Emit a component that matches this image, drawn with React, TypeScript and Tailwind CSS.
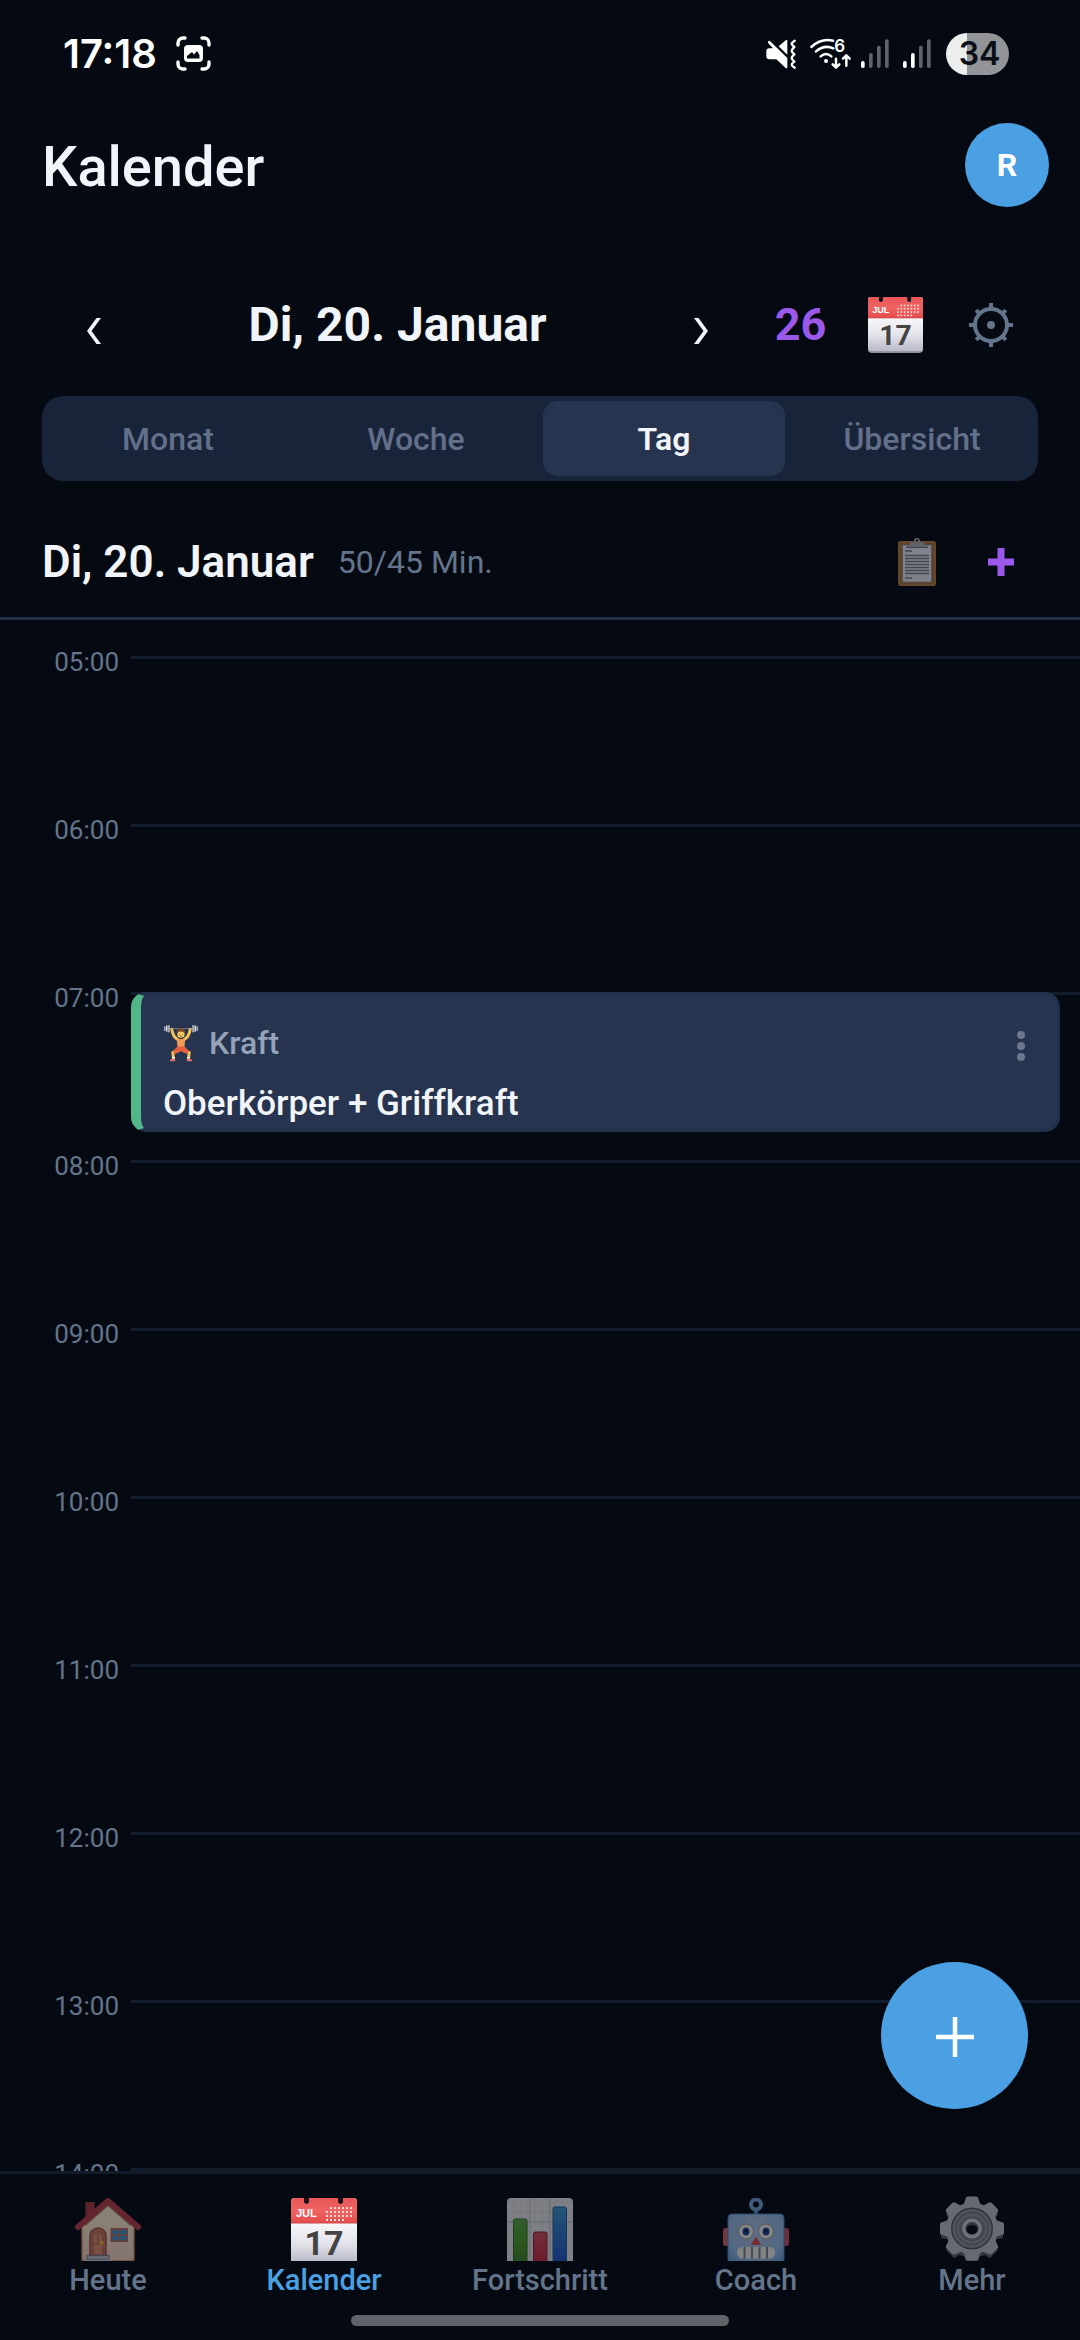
import { useState } from 'react';
import type { ReactNode } from 'react';

function ScreenshotIcon() {
  return (
    <svg viewBox="0 0 35 35" className="h-[35px] w-[35px]" fill="none" aria-hidden="true">
      <path
        d="M2 9V7a5 5 0 0 1 5-5h2M26 2h2a5 5 0 0 1 5 5v2M33 26v2a5 5 0 0 1-5 5h-2M9 33H7a5 5 0 0 1-5-5v-2"
        stroke="#fff"
        strokeWidth="3.4"
        strokeLinecap="round"
      />
      <path
        fillRule="evenodd"
        d="M12 9h11a4 4 0 0 1 4 4v9a4 4 0 0 1-4 4H12a4 4 0 0 1-4-4v-9a4 4 0 0 1 4-4Zm-1 13.500h12.500V19l-2.500-4-3 3.500-2-2.500-5 4Z"
        fill="#fff"
      />
    </svg>
  );
}

function MuteIcon() {
  return (
    <svg viewBox="80 82 90 90" className="h-[30px] w-[30px]" fill="#fff" aria-hidden="true">
      <path d="M91 87 144 139V168q-2 4-5 1L111 143H90q-9 0-9-9v-16q0-8 9-8h11L86 94q-2-6 5-7Z" />
      <path d="M118 104 140 85q4-2 4 2V129Z" />
      <path
        d="M166 87q-9 6-9 9 0 3 8 10-8 7-8 11 0 4 8 11-8 7-8 11 0 4 8 11-8 6-8 9 0 3 9 9"
        fill="none"
        stroke="#fff"
        strokeWidth="7"
        strokeLinecap="round"
        strokeLinejoin="round"
      />
    </svg>
  );
}

function WifiIcon() {
  return (
    <svg viewBox="213 82 123 93" className="h-[31px] w-[41px] overflow-visible" aria-hidden="true">
      <g fill="none" stroke="#fff" strokeWidth="7.500" strokeLinecap="round" strokeLinejoin="round">
        <path d="M217 109Q246 82 282 90M231 122Q256 101 283 113M245 137Q261 123 277 137" />
        <path d="M291 144v26M281 161l10 10 10-10M322 165v-29M312 144l10-10 10 10" />
      </g>
      <circle cx="261" cy="151" r="6" fill="#fff" />
      <text x="286" y="125" fontSize="51" fontWeight="600" fontFamily="Inter, sans-serif" fill="#fff">
        6
      </text>
    </svg>
  );
}

function SignalIcon({ level }: { level: number }) {
  const tops = [66, 42, 20, 1];
  return (
    <svg viewBox="0 0 84 87" className="h-[29px] w-[28px]" aria-hidden="true">
      {tops.map((top, i) => (
        <rect
          key={top}
          x={i * 24}
          y={top}
          width="11"
          height={87 - top}
          rx="5"
          fill={i < level ? '#fff' : '#5f636b'}
        />
      ))}
    </svg>
  );
}

function CalendarEmoji({ className, clipped }: { className: string; clipped?: boolean }) {
  const dots: ReactNode[] = [];
  for (let r = 0; r < 4; r++) {
    for (let c = 0; c < 7; c++) {
      if ((r === 0 && c < 1) || (r === 3 && c > 4)) continue;
      dots.push(<rect key={`${r}-${c}`} x={35 + c * 4} y={9 + r * 4} width="2" height="2" fill="#ffd9d6" />);
    }
  }
  return (
    <svg viewBox={clipped ? '0 0 66 63' : '0 0 66 67'} className={className} aria-hidden="true">
      <defs>
        <linearGradient id="calPaper" x1="0" y1="0" x2="0" y2="1">
          <stop offset="0.350" stopColor="#fafafc" />
          <stop offset="0.700" stopColor="#e3e3ea" />
          <stop offset="1" stopColor="#b9b8c8" />
        </linearGradient>
        <linearGradient id="calRed" x1="0" y1="0" x2="0" y2="1">
          <stop offset="0" stopColor="#ea5558" />
          <stop offset="0.500" stopColor="#ee6462" />
          <stop offset="1" stopColor="#e64c4d" />
        </linearGradient>
      </defs>
      <rect width="66" height="67" rx="4" fill="#8d8d9c" />
      <rect width="66" height="65" rx="4" fill="url(#calPaper)" />
      <path d="M4 0h9v4q0 2 2.500 2t2.500-2V0h29v4q0 2 2.500 2t2.500-2V0h10q4 0 4 4v21H0V4q0-4 4-4Z" fill="url(#calRed)" />
      <path d="M0 25h66" stroke="#c9494c" strokeWidth="1" />
      <path d="M13 0h5v4q0 2-2.500 2T13 4ZM47 0h5v4q0 2-2.500 2T47 4Z" fill="#1b0d13" />
      {dots}
      <text x="5" y="19" fontSize="11" fontWeight="700" fontFamily="Liberation Sans, sans-serif" fill="#fff">
        JUL
      </text>
      <text x="33" y="57" textAnchor="middle" fontSize="34" fontWeight="700" fontFamily="Roboto, sans-serif" fill="#444">
        17
      </text>
    </svg>
  );
}

function HouseEmoji() {
  return (
    <svg viewBox="0 0 66 63" className="h-[63px] w-[66px]" aria-hidden="true">
      <defs>
        <linearGradient id="wall" x1="0" y1="0" x2="0" y2="1">
          <stop offset="0.300" stopColor="#f3e3c6" />
          <stop offset="1" stopColor="#eec9bd" />
        </linearGradient>
      </defs>
      <rect x="10.500" y="4" width="9" height="20" rx="1" fill="#a8383f" />
      <path d="M7 27 33 5l26 22v34q0 2-2 2H9q-2 0-2-2Z" fill="url(#wall)" stroke="#c58c66" strokeWidth="1.500" />
      <path d="M9 26 33 5l24 21" fill="none" stroke="#8d4a33" strokeWidth="5" opacity="0.600" />
      <path d="M3 29 33 3l30 26" fill="none" stroke="#b23c46" strokeWidth="6" strokeLinecap="round" strokeLinejoin="round" />
      <path d="M15 59V38a8 8 0 0 1 16 0v21Z" fill="#c4745c" stroke="#9a5140" strokeWidth="1.500" />
      <path d="M18 57V39a5 5 0 0 1 10 0v18Z" fill="#d9886d" stroke="#a85f4b" />
      <path d="M18 46h10M23 35v11" stroke="#a85f4b" />
      <circle cx="27" cy="45" r="1.700" fill="#f4bd2c" />
      <rect x="35.500" y="30" width="17.500" height="14" fill="#b9655a" />
      <path d="M37.500 32h6v4.500h-6ZM45 32h6.500v4.500H45ZM37.500 38h6v4.500h-6ZM45 38h6.500v4.500H45Z" fill="#3d94c6" />
      <rect x="12" y="57.500" width="22" height="4" fill="#b9b5c2" stroke="#777686" />
      <path d="M9 62.500h27" stroke="#cfcbd6" strokeWidth="1.500" />
    </svg>
  );
}

function ChartEmoji() {
  return (
    <svg viewBox="0 0 66 63" className="h-[63px] w-[66px]" aria-hidden="true">
      <defs>
        <linearGradient id="barGreen" x1="0" y1="0" x2="0" y2="1">
          <stop offset="0" stopColor="#5da24c" />
          <stop offset="0.500" stopColor="#4c9a24" />
          <stop offset="1" stopColor="#3b7d2e" />
        </linearGradient>
        <linearGradient id="barRed" x1="0" y1="0" x2="0" y2="1">
          <stop offset="0" stopColor="#c9505a" />
          <stop offset="1" stopColor="#c62643" />
        </linearGradient>
        <linearGradient id="barBlue" x1="0" y1="0" x2="0" y2="1">
          <stop offset="0" stopColor="#3f93c8" />
          <stop offset="1" stopColor="#2353c4" />
        </linearGradient>
      </defs>
      <rect width="66" height="70" rx="4" fill="#e2e2e5" />
      <path
        d="M7 0v63M14 0v63M21 0v63M28 0v63M35 0v63M42 0v63M49 0v63M56 0v63M0 4h66M0 14h66M0 24h66M0 34h66M0 44h66M0 54h66"
        stroke="#d2d3d9"
        strokeWidth="1"
      />
      <path d="M23 0v63M43 0v63M0 24h66" stroke="#bcbec6" />
      <path d="M6.500 64V23q0-2 2-2h9.500q2 0 2 2v41Z" fill="url(#barGreen)" stroke="#2f6c22" />
      <path d="M26.500 64V36q0-2 2-2h9.500q2 0 2 2v28Z" fill="url(#barRed)" stroke="#93203a" />
      <path d="M46 64V11q0-2 2-2h9.500q2 0 2 2v53Z" fill="url(#barBlue)" stroke="#1f5f9a" />
    </svg>
  );
}

function RobotEmoji() {
  return (
    <svg viewBox="0 0 66 63" className="h-[63px] w-[66px]" aria-hidden="true">
      <defs>
        <radialGradient id="robotHead" cx="0.500" cy="0.350" r="0.700">
          <stop offset="0" stopColor="#a9c0e0" />
          <stop offset="0.700" stopColor="#93b4de" />
          <stop offset="1" stopColor="#6b9ed6" />
        </radialGradient>
      </defs>
      <rect x="31" y="11" width="4" height="6" fill="#4f86bd" />
      <circle cx="33" cy="6.500" r="5" fill="none" stroke="#6f9cc8" strokeWidth="4" />
      <rect x="0" y="30" width="8" height="18" rx="3" fill="#d2606e" />
      <rect x="58" y="30" width="8" height="18" rx="3" fill="#c94b5c" />
      <rect x="5" y="16" width="56" height="54" rx="4" fill="url(#robotHead)" stroke="#4a7fb8" />
      <g fill="#eeece6" stroke="#8f9096" strokeWidth="1">
        <circle cx="23" cy="33.500" r="7.500" />
        <circle cx="43" cy="33.500" r="7.500" />
      </g>
      <ellipse cx="23" cy="33.500" rx="3.500" ry="4" fill="#234690" />
      <ellipse cx="43" cy="33.500" rx="3.500" ry="4" fill="#234690" />
      <circle cx="23" cy="33" r="1.500" fill="#0c1c46" />
      <circle cx="43" cy="33" r="1.500" fill="#0c1c46" />
      <path d="M33 39q1 0 5 8H28q4-8 5-8Z" fill="#cf4d4d" />
      <rect x="14" y="49" width="38" height="11.500" rx="5.500" fill="#e8e6e2" />
      <path d="M21.500 49v11.500M29 49v11.500M36.500 49v11.500M44 49v11.500" stroke="#7c7f8c" strokeWidth="2" />
    </svg>
  );
}

function GearEmoji() {
  const teeth = [0, 45, 90, 135, 180, 225, 270, 315];
  return (
    <svg viewBox="0 0 66 65" className="h-[65px] w-[66px]" aria-hidden="true">
      <g transform="translate(33 36)" fill="#5d5c6a">
        {teeth.map((a) => (
          <path key={a} d="M-8-22-6-31H6L8-22Z" transform={`rotate(${a})`} />
        ))}
        <circle r="26" />
      </g>
      <g transform="translate(33 32.500)" fill="#b9babf">
        {teeth.map((a) => (
          <path key={a} d="M-9-22-6-31q1-1 2-1H4q1 0 2 1L9-22Z" transform={`rotate(${a})`} />
        ))}
        <circle r="26" />
        <circle r="21" fill="#4f525b" />
        <circle r="19.500" fill="#8f929a" />
        <circle r="16" fill="none" stroke="#6b6e78" strokeWidth="1.500" />
        <circle r="13" fill="#777a83" />
        <circle r="10" fill="#c6c7cb" />
        <circle r="6.500" fill="#55575f" />
        <ellipse cy="1" rx="5.500" ry="4.500" fill="#080b12" />
      </g>
    </svg>
  );
}

function ClipboardEmoji() {
  return (
    <svg viewBox="0 0 38 48" className="h-12 w-[38px]" aria-hidden="true">
      <rect y="3" width="38" height="45" rx="2.500" fill="#a8713a" />
      <rect x="1" y="4" width="36" height="43" rx="2" fill="none" stroke="#b98546" />
      <rect x="4.500" y="7" width="29" height="37" fill="#e4e4ec" stroke="#8e8d99" strokeWidth="0.800" />
      <circle cx="19" cy="3" r="2.200" fill="none" stroke="#b5b7bd" strokeWidth="1.500" />
      <path d="M12 4h5l2 1 2-1h5v3l4 1v2H8V8l4-1Z" fill="#a9abb1" />
      <path d="M8 9.500h22" stroke="#71737b" />
      <path
        d="M7 13h7M7 17.500h24M7 20.500h24M7 23.500h24M7 26.500h24M7 29.500h24M7 32.500h24M7 35.500h24M7 40h7"
        stroke="#777986"
        strokeWidth="1.300"
      />
    </svg>
  );
}

function LifterEmoji() {
  return (
    <svg viewBox="118 117 106 116" className="h-[38px] w-[36px]" aria-hidden="true">
      <path d="M122 131h98" stroke="#777b86" strokeWidth="3" />
      <g fill="#a4a7af">
        <rect x="119" y="124" width="5" height="14" rx="2" />
        <rect x="125" y="121" width="5" height="20" rx="2" fill="#d0d2d6" />
        <rect x="131" y="120" width="6" height="23" rx="2" />
        <rect x="205" y="120" width="6" height="23" rx="2" />
        <rect x="212" y="121" width="5" height="20" rx="2" fill="#d0d2d6" />
        <rect x="218" y="124" width="5" height="14" rx="2" />
      </g>
      <g fill="none" strokeLinecap="round" strokeLinejoin="round">
        <path d="M143 134q3 22 19 31M199 134q-3 22-19 31" stroke="#f5c25a" strokeWidth="9" />
        <path d="M160 200 146 204 148 222M182 200 196 204 194 222" stroke="#f5c25a" strokeWidth="9" />
      </g>
      <path d="M158 163h26l-3 30H161Z" fill="#f09a55" />
      <path d="M160 186h22l14 14-8 8-17-8-17 8-8-8Z" fill="#e6603f" />
      <rect x="160" y="133" width="22" height="26" rx="10" fill="#f8cc63" />
      <path d="M159 145q-1-15 12-15t12 15q-4-5-12-5t-12 5Z" fill="#7c4a23" />
      <path d="M165 148h3M174 148h3M167 154h8" stroke="#6b3e20" strokeWidth="2" />
      <path d="M144 218h8v5h-8ZM190 218h8v5h-8Z" fill="#fff" />
      <path d="M137 231q-1-6 8-9h8v9ZM205 231q1-6-8-9h-8v9Z" fill="#dc7466" />
    </svg>
  );
}

function GearOutlineIcon() {
  const teeth = [0, 45, 90, 135, 180, 225, 270, 315];
  return (
    <svg viewBox="-22 -22 44 44" className="h-11 w-11" aria-hidden="true">
      <circle r="16" fill="none" stroke="#64748b" strokeWidth="4" />
      <circle r="4" fill="#64748b" />
      {teeth.map((a) => (
        <path key={a} d={a % 90 ? 'M0-16V-21' : 'M0-16V-22'} stroke="#64748b" strokeWidth="4" transform={`rotate(${a})`} />
      ))}
    </svg>
  );
}

const hours = ['05:00', '06:00', '07:00', '08:00', '09:00', '10:00', '11:00', '12:00', '13:00', '14:00'];
const views = ['Monat', 'Woche', 'Tag', 'Übersicht'];
const tabs: { label: string; icon: ReactNode }[] = [
  { label: 'Heute', icon: <HouseEmoji /> },
  { label: 'Kalender', icon: <CalendarEmoji className="h-[63px] w-[66px]" clipped /> },
  { label: 'Fortschritt', icon: <ChartEmoji /> },
  { label: 'Coach', icon: <RobotEmoji /> },
  { label: 'Mehr', icon: <GearEmoji /> },
];

function WorkoutCard() {
  return (
    <article className="-mt-[3px] mr-5 flex h-[140px] items-start justify-between overflow-hidden rounded-[15px] border-[3px] border-l-[10px] border-[#21304c] border-l-[#52b788] bg-[#263450] pt-7 pr-8 pl-[22px]">
      <div>
        <div className="flex items-center gap-2.5 text-[32px] leading-10 font-medium text-[#94a3b8]">
          <LifterEmoji />
          Kraft
        </div>
        <h3 className="mt-5 text-[35px] leading-[42px] font-medium text-[#f1f5f9]">Oberkörper + Griffkraft</h3>
      </div>
      <button type="button" aria-label="Optionen" className="mt-2 flex flex-col gap-[3px]">
        <span className="h-2 w-2 rounded-full bg-[#6b7890]" />
        <span className="h-2 w-2 rounded-full bg-[#6b7890]" />
        <span className="h-2 w-2 rounded-full bg-[#6b7890]" />
      </button>
    </article>
  );
}

export default function App() {
  const [view, setView] = useState('Tag');
  const [tab, setTab] = useState('Kalender');

  return (
    <div className="relative flex h-screen flex-col overflow-hidden bg-[#050a12] font-[Roboto,sans-serif] text-[#f1f5f9]">
      <div className="flex h-[107px] shrink-0 items-center justify-between pr-[71px] pl-[63px]">
        <div className="flex items-center gap-[19px]">
          <span className="font-[Inter,sans-serif] text-[40px] font-semibold text-white">17:18</span>
          <ScreenshotIcon />
        </div>
        <div className="flex items-center">
          <MuteIcon />
          <span className="ml-3.5">
            <WifiIcon />
          </span>
          <span className="ml-2.5">
            <SignalIcon level={1} />
          </span>
          <span className="ml-3.5">
            <SignalIcon level={2} />
          </span>
          <span className="ml-[15px] flex h-[42px] w-[63px] items-center justify-center rounded-full bg-linear-to-r from-[#eceeee] from-33% to-[#929497] to-33% pl-1 font-[Inter,sans-serif] text-[32px] leading-none font-semibold text-[#0a0f17]">
            34
          </span>
        </div>
      </div>

      <header className="flex shrink-0 items-center justify-between py-4 pr-[31px] pl-[42px]">
        <h1 className="pt-1 text-[56px] leading-[66px] font-medium">Kalender</h1>
        <button
          type="button"
          aria-label="Profil"
          className="flex h-21 w-21 items-center justify-center rounded-full bg-[#4aa0e2] text-[32px] font-bold text-white"
        >
          R
        </button>
      </header>

      <div className="mx-[42px] mt-[52px] flex h-[100px] shrink-0 items-center">
        <button type="button" aria-label="Vorheriger Tag" className="flex h-full w-26 items-center justify-center pt-3">
          <svg viewBox="0 0 14 26" className="h-[26px] w-3.5" fill="#f1f5f9" aria-hidden="true">
            <path d="M9.500 0H14L4.500 13 14 26H9.500L0 13Z" />
          </svg>
        </button>
        <h2 className="flex-1 text-center text-[48px] leading-[58px] font-bold">Di, 20. Januar</h2>
        <button type="button" aria-label="Nächster Tag" className="flex h-full w-26 items-center justify-center pt-3">
          <svg viewBox="0 0 14 26" className="h-[26px] w-3.5" fill="#f1f5f9" aria-hidden="true">
            <path d="M4.500 0H0L9.500 13 0 26H4.500L14 13Z" />
          </svg>
        </button>
        <button type="button" className="h-full w-[95px] text-[45px] font-bold text-[#9b59ec]">
          26
        </button>
        <button type="button" aria-label="Kalender öffnen" className="flex h-full w-[95px] items-center justify-center">
          <CalendarEmoji className="h-14 w-[55px]" />
        </button>
        <button type="button" aria-label="Einstellungen" className="flex h-full w-[95px] items-center justify-center">
          <GearOutlineIcon />
        </button>
      </div>

      <div className="mx-[42px] mt-[21px] flex h-[85px] shrink-0 gap-1.5 rounded-[21px] bg-[#18243a] p-[5px]">
        {views.map((v) => (
          <button
            key={v}
            type="button"
            aria-pressed={v === view}
            onClick={() => setView(v)}
            className={
              v === view
                ? 'flex-1 rounded-[15px] bg-[#263450] text-[32px] font-semibold text-[#f1f5f9]'
                : 'flex-1 rounded-[15px] text-[32px] font-medium text-[#64708a]'
            }
          >
            {v}
          </button>
        ))}
      </div>

      <div className="mt-[26px] flex shrink-0 items-center border-b-[3px] border-[#203049] pr-[37px] pl-[42px]">
        <div className="flex h-[110px] flex-1 items-center gap-6">
          <h2 className="text-[44px] leading-[52px] font-semibold">Di, 20. Januar</h2>
          <span className="text-[32px] leading-10 text-[#64748b]">50/45 Min.</span>
        </div>
        <button type="button" aria-label="Plan kopieren" className="flex h-21 w-21 items-center justify-center opacity-55">
          <ClipboardEmoji />
        </button>
        <button type="button" aria-label="Training hinzufügen" className="flex h-21 w-21 items-center justify-center">
          <svg viewBox="0 0 26 28" className="h-7 w-[26px]" aria-hidden="true">
            <path d="M13 0v28M0 14h26" stroke="#9b59ec" strokeWidth="7" />
          </svg>
        </button>
      </div>

      <main className="min-h-0 flex-1 overflow-hidden pt-9">
        {hours.map((h) => (
          <div key={h} className="flex h-42">
            <div className="-mt-2 w-[131px] shrink-0 pr-3 text-right text-[26px] leading-7 text-[#64748b]">{h}</div>
            <div className="min-w-0 flex-1 border-t-[3px] border-[#131c2b]">{h === '07:00' && <WorkoutCard />}</div>
          </div>
        ))}
      </main>

      <button
        type="button"
        aria-label="Neu"
        className="absolute right-[52px] bottom-[231px] flex h-[147px] w-[147px] items-center justify-center rounded-full bg-[#4aa0e2] pt-0.5 shadow-[0_12px_20px_rgba(0,0,0,0.2)]"
      >
        <svg viewBox="0 0 38 40" className="h-10 w-[38px]" aria-hidden="true">
          <path d="M19 0v40M0 20h38" stroke="#fff" strokeWidth="4.500" />
        </svg>
      </button>

      <nav className="shrink-0 border-t-[3px] border-[#111b29] pt-6 pb-3.5">
        <div className="flex">
          {tabs.map(({ label, icon }) => (
            <button
              key={label}
              type="button"
              aria-current={label === tab ? 'page' : undefined}
              onClick={() => setTab(label)}
              className="flex min-w-0 flex-1 flex-col items-center"
            >
              <span className={label === tab ? 'flex h-[63px] items-end' : 'flex h-[63px] items-end opacity-55'}>{icon}</span>
              <span
                className={
                  label === tab
                    ? 'text-[29px] leading-[38px] font-medium text-[#4aa0e2]'
                    : 'text-[29px] leading-[38px] font-medium text-[#64748b]'
                }
              >
                {label}
              </span>
            </button>
          ))}
        </div>
        <div className="mx-auto mt-4 h-[11px] w-[35%] rounded-full bg-[#606367]" />
      </nav>
    </div>
  );
}
